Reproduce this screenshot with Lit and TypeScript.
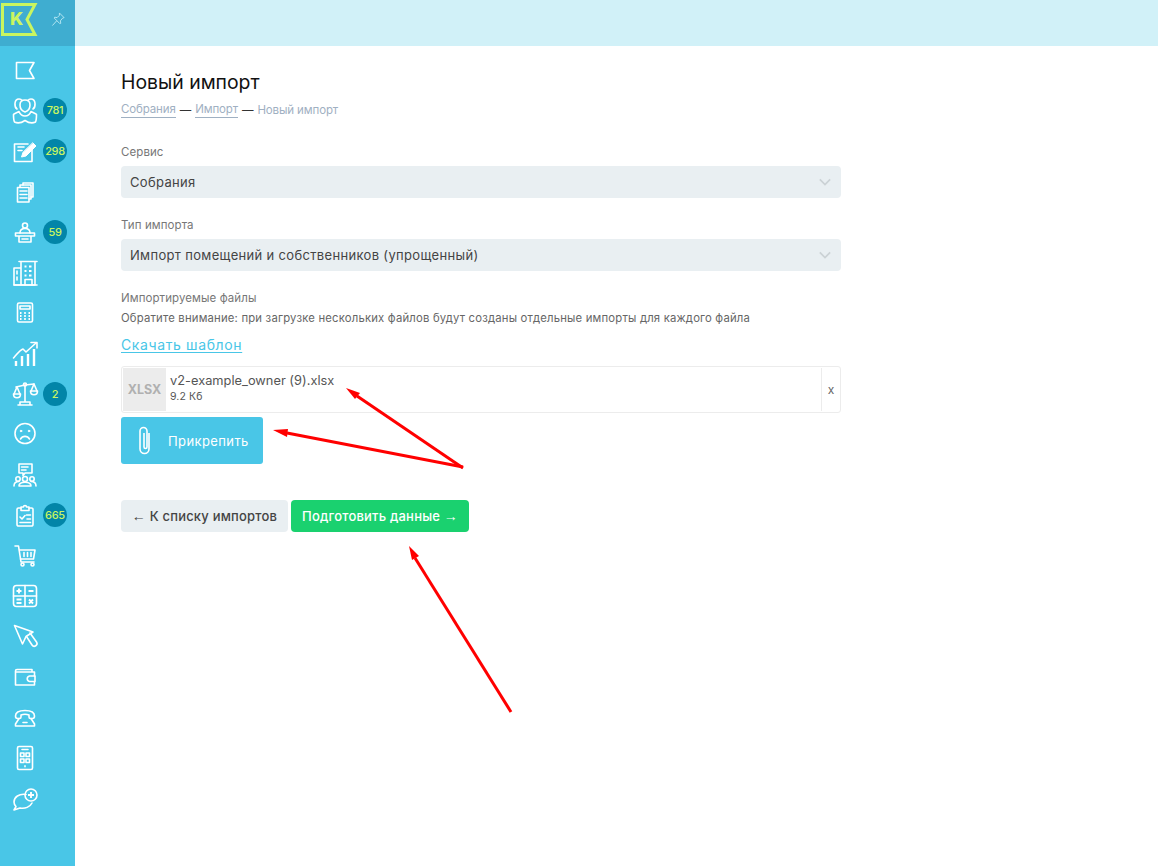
import { LitElement, html, css, svg } from "lit";
import { customElement } from "lit/decorators.js";

const icons: Record<string, any> = {
  flag: svg`<path d="M8.5 9.5H26L21.5 17.5L26 25.5H8.5Z"/>`,
  people: svg`<path d="M9 15C6 13 6 5 11 5c1.5 0 2.5.5 3 1.5"/><path d="M25 15C28 13 28 5 23 5c-1.5 0-2.5.5-3 1.5"/><path d="M17 6c3 0 5 2 5 5s-2 6-5 7c-3-1-5-4-5-7s2-5 5-5Z"/><path d="M6 20l5-2.500c1 2.500 3.500 4.500 6 4.500s5-2 6-4.500l5 2.500"/><path d="M5.500 20.500c0 3 .5 6.500 1 7.500 3 1.500 7.500.5 10.500-1.500 3 2 7.500 3 10.500 1.500.5-1 1-4.500 1-7.500"/>`,
  edit: svg`<path d="M20 10H6.5V27.5H24V16"/><path d="M10 13H16M10 16.5H14"/><path class="solid" d="M25 9l3 3-10 10-4.5 1 1.5-4.5Z"/>`,
  docs: svg`<path d="M15 10V8H25V22H23"/><path d="M12 12V10H23V24H21"/><path d="M9.5 12.5H21V27H9.5Z"/><path d="M12 16H19M12 19.5H19M12 23H19"/>`,
  desk: svg`<circle cx="17" cy="10.500" r="2.500"/><path d="M12 18c0-3 2-4.500 5-4.500s5 1.500 5 4.500"/><path d="M7.500 18H26.500V21H7.500ZM11 21V27H23V21M14 24H20"/>`,
  building: svg`<path d="M6 12H13V29H6ZM13 6.500V29H27V6.500M11 5.500H29"/><path d="M6 29H29M9 15V18M9 21V24"/><path class="thick" d="M16.500 10.500H18.500M21 10.500H23.500M16.500 15H18.500M21 15H23.500M16.500 19.500H18.500M21 19.500H23.500"/><path d="M17 29V23.500H24V29"/>`,
  calc: svg`<rect x="9.500" y="7" width="15" height="19" rx="1.500"/><path d="M12 10H22V13H12Z"/><path class="thick" d="M12 17H13.500M16.200 17H17.800M20.500 17H22M12 20H13.500M16.200 20H17.800M20.500 20H22M12 23H13.500M16.200 23H17.800M20.500 23H22"/>`,
  chart: svg`<path d="M5.500 21C9 17 12 13 15 12L18 15L28 6"/><path d="M23 5.500H29V11"/><path class="bars" d="M8 29V24M14 29V19M20 29V17M26 29V12"/>`,
  scales: svg`<path d="M17 8V25M8 10L17 8L26 7M12 28V25H22V28H10H24"/><circle cx="17" cy="7.500" r="1.500"/><path d="M9 10L6 17M9 10L12 17M26 7L23 14M26 7L29 14"/><path d="M5.500 17H12.500C12.500 22 5.500 22 5.500 17ZM22.500 14H29.500C29.500 19 22.500 19 22.500 14Z"/>`,
  sad: svg`<circle cx="17" cy="16.500" r="10"/><circle class="solid" cx="13" cy="14" r="0.800"/><circle class="solid" cx="21" cy="14" r="0.800"/><path d="M12.500 22c2-3.500 7-3.500 9 0"/>`,
  team: svg`<path d="M11 6H24V15H17L15 17.500V15H11Z"/><path d="M13.500 9H20M13.500 12H18"/><circle cx="10" cy="21" r="2.200"/><circle cx="17" cy="21" r="2.500"/><circle cx="24" cy="21" r="2.200"/><path d="M6 28c0-4 3-4.500 5-4.500M28 28c0-4-3-4.500-5-4.500M11 28c0-5 12-5 12 0Z"/>`,
  clip: svg`<path d="M13 10H10.500a1.500 1.500 0 0 0-1.500 1.500V26.500a1.500 1.500 0 0 0 1.500 1.500H23.500a1.500 1.500 0 0 0 1.500-1.500V11.500a1.500 1.500 0 0 0-1.500-1.500H21"/><path d="M13 12.500V9H15.500a1.500 1.500 0 0 1 3 0H21V12.500Z"/><path d="M12 19l2 2 3-3.500M18.500 17H22.500M19 21H22.500M12 24.500H22.500"/>`,
  cart: svg`<path d="M7 7H10.500L13 23H26"/><path d="M11.500 11H27L25.500 20H12.500"/><path d="M16 13.500V17.500M19.500 13.500V17.500M23 13.500V17.500"/><circle cx="14.500" cy="25.500" r="1.500"/><circle cx="24.500" cy="25.500" r="1.500"/>`,
  math: svg`<rect x="5.500" y="6.500" width="23" height="21" rx="3"/><path d="M17 6.500V27.500M5.500 17H28.500"/><path class="thick" d="M8.500 12H13.500M11 9.500V14.500M20.500 12H25.500M8.500 20.500H13.500M8.500 24H13.500M21 20.500L25 24.500M25 20.500L21 24.500"/>`,
  cursor: svg`<path d="M6.500 5.500L25 12L18 16.500L14.500 24Z"/><path d="M18.500 16.500L24 25a2.500 2.500 0 0 0 4.500-3L22 13"/>`,
  wallet: svg`<path d="M24 12V9.500H9a1.500 1.500 0 0 0-1.500 1.500V25H26.500V22M7.500 12H26.500V16"/><path d="M21.500 16H27V21.500H21.500a2.800 2.800 0 0 1 0-5.500Z"/>`,
  phone: svg`<path d="M7.500 15C7.500 11 11 9.500 17 9.500s9.500 1.500 9.500 5.500c0 1.500-.5 2.500-2 2.500H22.500c-1 0-1.500-.5-1.500-1.500V14c-2.500-1-5.500-1-8 0V16c0 1-.5 1.500-1.500 1.500H9.500c-1.500 0-2-1-2-2.500Z"/><path d="M11 17.500L7.500 23V25H26.500V23L23 17.500M15 21.500H19"/>`,
  mobile: svg`<rect x="9.500" y="5.500" width="15" height="23" rx="1.500"/><path d="M14 8.500H20M12.500 12H16V15.500H12.500ZM18 12H21.500V15.500H18ZM12.500 18H16V21.500H12.500ZM18 18H21.500V21.500H18Z"/><path class="thick" d="M16.200 25.200H17.800"/>`,
  chat: svg`<path d="M18 12.500C11 11.500 6 15 6 20c0 2 1 3.500 2 4.500L6 28l6-2c5 1 10-1 12-5"/><circle cx="23" cy="13" r="6"/><path class="thick" d="M23 10V16M20 13H26"/>`,
};

const items: [string, string?][] = [
  ["flag"], ["people", "781"], ["edit", "298"], ["docs"], ["desk", "59"], ["building"], ["calc"],
  ["chart"], ["scales", "2"], ["sad"], ["team"], ["clip", "665"], ["cart"], ["math"], ["cursor"],
  ["wallet"], ["phone"], ["mobile"], ["chat"],
];

@customElement("app-root")
export class AppRoot extends LitElement {
  static styles = css`
    :host {
      display: block;
      position: relative;
      height: 866px;
      overflow: hidden;
      background: #fff;
      font-family: Inter, "Noto Sans", sans-serif;
      color: #444;
    }
    .top { display: flex; height: 46px; background: #d1f1f8; }
    .brand {
      width: 75px;
      background: #3fadd0;
      display: flex;
      align-items: center;
      gap: 13px;
      padding: 0 0 7px 1px;
      box-sizing: border-box;
    }
    .logo { position: relative; width: 37px; height: 33px; }
    .logo svg { display: block; }
    .logo span {
      position: absolute;
      left: 9px;
      top: 5px;
      color: #c9f560;
      font-weight: 800;
      font-size: 18px;
      line-height: 22px;
    }
    .pin { stroke: #b9e8f3; fill: none; stroke-width: 1; display: block; }
    .body { display: flex; height: 820px; }
    .side { width: 75px; background: #49c6e7; padding-top: 4px; box-sizing: border-box; flex: none; }
    .item { height: 40.47px; display: flex; align-items: center; position: relative; padding-left: 8px; }
    .item svg { fill: none; stroke: #fff; stroke-width: 1.6; stroke-linejoin: round; stroke-linecap: round; display: block; }
    .item svg .solid { fill: #fff; stroke-width: 1; }
    .item svg .thick { stroke-width: 1.9; stroke-linecap: butt; }
    .item svg .bars { stroke-width: 2.4; stroke-linecap: butt; }
    .badge {
      position: absolute;
      left: 43px;
      top: 8px;
      width: 24px;
      height: 24px;
      border-radius: 50%;
      background: #0285a8;
      color: #c9f560;
      font-size: 11px;
      font-weight: 500;
      letter-spacing: -0.3px;
      display: flex;
      align-items: center;
      justify-content: center;
    }
    main { padding: 23px 0 0 46px; width: 720px; }
    h1 { margin: 0; font-size: 19.4px; line-height: 26px; font-weight: 400; color: #111; }
    .crumbs { margin-top: 7px; font-size: 11.5px; line-height: 16px; letter-spacing: -0.12px; color: #9fb0c2; display: flex; gap: 4px; }
    .crumbs a { border-bottom: 1px solid #9fb0c2; line-height: 15px; }
    .crumbs i { font-style: normal; color: #333; }
    .label { font-size: 11.5px; line-height: 16px; color: #777; letter-spacing: 0.08px; }
    .first { margin-top: 26px; }
    .select {
      margin-top: 6px;
      height: 32px;
      background: #e9eff2;
      border-radius: 4px;
      display: flex;
      align-items: center;
      justify-content: space-between;
      padding: 0 10px 1px 9px;
      box-sizing: border-box;
      font-size: 13px;
      letter-spacing: 0.33px;
      color: #444;
    }
    .select svg { fill: none; stroke: #cbd2d5; stroke-width: 2; }
    .gap { margin-top: 19px; }
    .note { margin-top: 4px; font-size: 11.3px; line-height: 16px; letter-spacing: 0.19px; color: #666; }
    .tpl { display: inline-block; margin-top: 10px; font-size: 14px; line-height: 18px; letter-spacing: 0.62px; color: #49c6e7; text-decoration: underline; text-underline-offset: 2px; }
    .file {
      margin-top: 12px;
      height: 47px;
      box-sizing: border-box;
      border: 1px solid #ececec;
      border-radius: 3px;
      display: flex;
      align-items: stretch;
      padding: 1px 0 1px 1px;
    }
    .thumb { width: 43px; background: #ececec; color: #b0b0b0; font-weight: 700; font-size: 12.5px; display: flex; align-items: center; justify-content: center; }
    .info { flex: 1; padding-left: 4px; }
    .fname { font-size: 12.8px; line-height: 16px; margin-top: 5px; letter-spacing: 0.02px; color: #555; }
    .fsize { font-size: 10.5px; line-height: 14px; margin-top: 1px; letter-spacing: 0.1px; color: #555; }
    .x { width: 18px; border-left: 1px solid #ececec; font-size: 12px; color: #666; display: flex; align-items: center; justify-content: center; }
    .attach {
      margin-top: 4px;
      width: 142px;
      height: 47px;
      background: #49c6e7;
      border-radius: 3px;
      display: flex;
      align-items: center;
      color: #fff;
      font-size: 13px;
      letter-spacing: 0.4px;
      padding-left: 15px;
      box-sizing: border-box;
      gap: 14px;
    }
    .attach svg { fill: none; stroke: #fff; stroke-width: 1.6; display: block; }
    .actions { margin-top: 36px; display: flex; gap: 3px; }
    .btn { height: 32px; border-radius: 4px; display: flex; align-items: center; justify-content: center; font-size: 13px; font-weight: 500; letter-spacing: 0.2px; box-sizing: border-box; white-space: pre; }
    .back { width: 167px; background: #e9eff2; color: #444; }
    .go { width: 178px; background: #1ad16f; color: #fff; }
    .arr { font-family: "Liberation Sans", sans-serif; font-weight: 400; font-size: 14px; }
    .arrows { position: absolute; inset: 0; pointer-events: none; }
  `;

  render() {
    return html`
      <div class="top">
        <div class="brand">
          <div class="logo">
            <svg width="37" height="33" viewBox="0 0 37 33" fill="none" stroke="#c9f560" stroke-width="3">
              <path d="M1.500 1.500H34L26 16.500L34 31.500H1.500Z" />
            </svg>
            <span>K</span>
          </div>
          <svg class="pin" width="14" height="15" viewBox="0 0 15 16">
            <path d="M9 1L14 6L12.500 6.500L10 9.500L10.500 12L9.500 12.500L3.500 6.500L4 5.500L6.500 6L9 3.500ZM6 9.500L1.500 14.500" />
          </svg>
        </div>
      </div>
      <div class="body">
        <nav class="side">
          ${items.map(([icon, badge]) => html`
            <div class="item">
              <svg width="34" height="34" viewBox="0 0 34 34">${icons[icon]}</svg>
              ${badge ? html`<span class="badge">${badge}</span>` : ""}
            </div>`)}
        </nav>
        <main>
          <h1>Новый импорт</h1>
          <div class="crumbs"><a>Собрания</a><i>—</i><a>Импорт</a><i>—</i><span>Новый импорт</span></div>
          <div class="label first">Сервис</div>
          <div class="select"><span>Собрания</span>
            <svg width="12" height="8" viewBox="0 0 14 8"><path d="M1 1L7 7L13 1"/></svg></div>
          <div class="label gap">Тип импорта</div>
          <div class="select"><span>Импорт помещений и собственников (упрощенный)</span>
            <svg width="12" height="8" viewBox="0 0 14 8"><path d="M1 1L7 7L13 1"/></svg></div>
          <div class="label gap">Импортируемые файлы</div>
          <div class="note">Обратите внимание: при загрузке нескольких файлов будут созданы отдельные импорты для каждого файла</div>
          <a class="tpl">Скачать шаблон</a>
          <div class="file">
            <div class="thumb">XLSX</div>
            <div class="info">
              <div class="fname">v2-example_owner (9).xlsx</div>
              <div class="fsize">9.2 Кб</div>
            </div>
            <div class="x">x</div>
          </div>
          <div class="attach">
            <svg width="18" height="32" viewBox="0 0 18 32"><path d="M13 8V24a4.500 4.500 0 0 1-9 0V6a3.500 3.500 0 0 1 7 0V22a1.500 1.500 0 0 1-3 0V8"/></svg>
            <span>Прикрепить</span>
          </div>
          <div class="actions">
            <div class="btn back"><span class="arr">←</span> К списку импортов</div>
            <div class="btn go">Подготовить данные <span class="arr">→</span></div>
          </div>
        </main>
      </div>
      <svg class="arrows" width="1158" height="866" viewBox="0 0 1158 866">
        <g stroke="#ff0000" stroke-width="3" fill="none">
          <path d="M463 468L357 396"/>
          <path d="M463 467L287 433"/>
          <path d="M511 712L415 558"/>
        </g>
        <g fill="#ff0000">
          <path d="M346 388L360 393L355 399Z"/>
          <path d="M273 430L288 429L287 437Z"/>
          <path d="M409 546L419 556L412 560Z"/>
        </g>
      </svg>
    `;
  }
}
